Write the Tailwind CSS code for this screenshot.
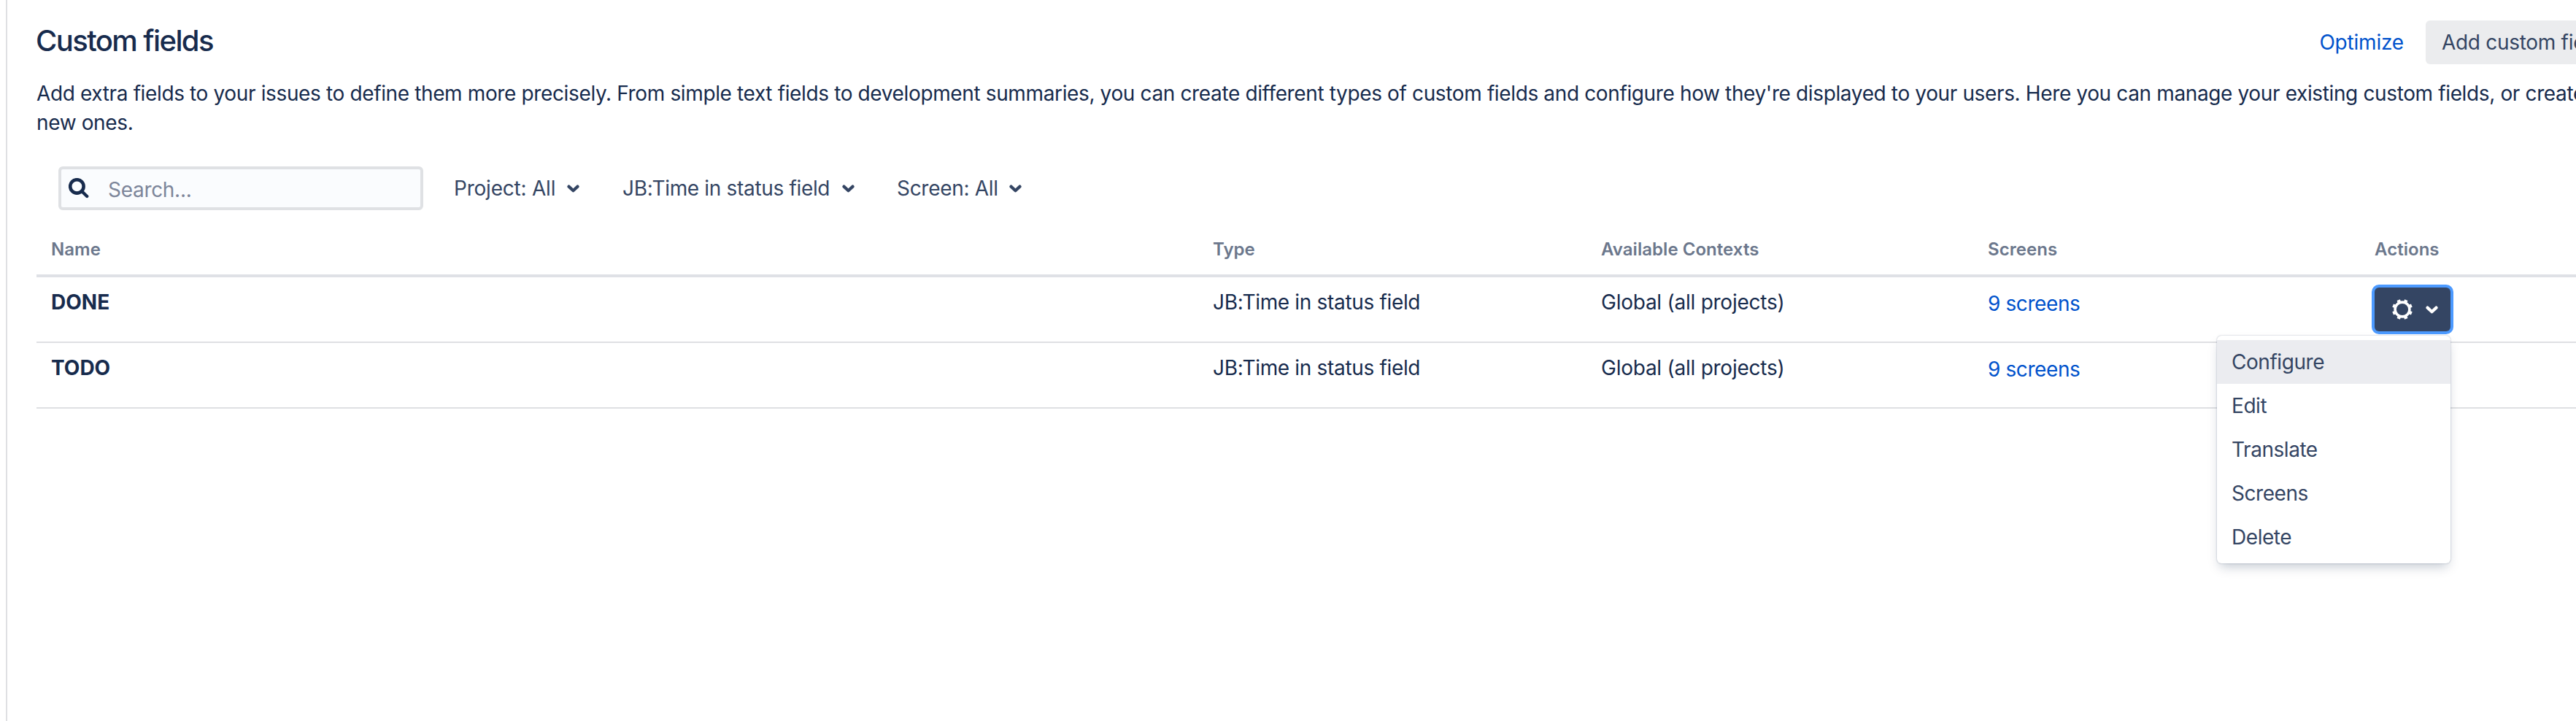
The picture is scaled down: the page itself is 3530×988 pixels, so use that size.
<!DOCTYPE html>
<html lang="en">
<head>
<meta charset="utf-8">
<title>Custom fields</title>
<script src="https://cdn.jsdelivr.net/npm/@tailwindcss/browser@4"></script>
</head>
<body class="bg-white overflow-hidden">
<svg class="hidden">
  <symbol id="chevron" viewBox="0 0 17 11"><path d="M2.5 2.6 8.5 8.2 14.5 2.6" fill="none" stroke="currentColor" stroke-width="4.2" stroke-linecap="round" stroke-linejoin="round"/></symbol>
  <symbol id="gear" viewBox="-14 -14 28 28">
    <circle r="9.9" fill="none" stroke="currentColor" stroke-width="3.6"/>
    <g stroke="currentColor" stroke-width="4.6" stroke-linecap="butt">
      <g transform="rotate(22.5)"><path d="M0-13.9V-10M0 13.9V10M-13.9 0H-10M13.9 0H10"/></g>
      <g transform="rotate(67.5)"><path d="M0-13.9V-10M0 13.9V10M-13.9 0H-10M13.9 0H10"/></g>
    </g>
  </symbol>
</svg>
<div class="h-[988px] w-full overflow-hidden pl-2 font-['Inter',sans-serif] text-[28px] leading-10 tracking-[-0.3px] text-[#172b4d]">
  <main class="h-full border-l-2 border-[#dfe0e3] pl-10">
    <div class="w-[3538px]">
      <header class="flex h-[108px] items-start justify-between pt-7">
        <h1 class="mt-1 text-[40px] leading-[48px] font-medium tracking-[-1.6px] -ml-px">Custom fields</h1>
        <div class="flex items-center">
          <a class="mr-[30px] tracking-[-0.2px] text-[#0052cc]">Optimize</a>
          <button class="h-[60px] w-[264px] rounded-md bg-[#ebecee] px-[22px] text-left whitespace-nowrap text-[#344563]">Add custom field</button>
        </div>
      </header>
      <p class="tracking-[-0.368px]">Add extra fields to your issues to define them more precisely. From simple text fields to development summaries, you can create different types of custom fields and configure how they're displayed to your users. Here you can manage your existing custom fields, or create new ones.</p>
      <div class="mt-10 ml-[30px] flex h-[60px] items-center text-[#344563]">
        <div class="mr-[42px] flex h-[60px] w-[500px] items-center rounded-md border-4 border-[#dfe1e4] bg-[#fafcfe] pl-2.5">
          <svg class="size-7 shrink-0 text-[#172b4d]" viewBox="0 0 28 28" fill="none" stroke="currentColor" stroke-linecap="round"><circle cx="11.4" cy="11.4" r="9.2" stroke-width="4.6"/><path d="M19 19l6.2 6" stroke-width="4.4"/></svg>
          <span class="mt-1 ml-[26px] text-[#7d869a]">Search...</span>
        </div>
        <button class="flex w-[231px] items-center gap-4"><span class="tracking-[-0.22px]">Project: All</span><svg class="h-[11px] w-[17px]"><use href="#chevron"/></svg></button>
        <button class="flex w-[376px] items-center gap-[17px]"><span class="tracking-[-0.33px]">JB:Time in status field</span><svg class="h-[11px] w-[17px]"><use href="#chevron"/></svg></button>
        <button class="flex items-center gap-[15px]"><span>Screen: All</span><svg class="h-[11px] w-[17px]"><use href="#chevron"/></svg></button>
      </div>
      <section>
        <div class="grid h-[92px] grid-cols-[1592px_532px_530px_530px_1fr] border-b-4 border-[#dfe1e6] pt-[38px] text-2xl leading-8 font-semibold tracking-[0.04px] text-[#6b778c] [&>div]:pl-5">
          <div>Name</div><div>Type</div><div>Available Contexts</div><div>Screens</div><div>Actions</div>
        </div>
        <div class="grid h-[90px] grid-cols-[1592px_532px_530px_530px_1fr] border-b-2 border-[#dfe0e3] pt-3.5 [&>div]:pl-5">
          <div class="font-bold tracking-[0px]">DONE</div>
          <div class="tracking-[-0.33px]">JB:Time in status field</div>
          <div class="tracking-[-0.25px]">Global (all projects)</div>
          <div class="pt-0.5 tracking-[-0.4px] text-[#0052cc]">9 screens</div>
          <div>
            <div class="relative w-[104px]">
              <button class="flex h-[60px] w-[104px] items-center gap-[18px] rounded-md bg-[#344563] pl-6 text-white ring-4 ring-[#4c9aff]">
                <svg class="size-7"><use href="#gear"/></svg>
                <svg class="h-[11px] w-[17px]"><use href="#chevron"/></svg>
              </button>
              <div class="absolute top-[66px] right-0 z-10 w-80 rounded-md bg-white py-1.5 tracking-[-0.45px] text-[#344563] shadow-[0_0_2px_rgba(9,30,66,0.35),0_8px_16px_-4px_rgba(9,30,66,0.25)] [&>div]:flex [&>div]:h-[60px] [&>div]:items-center [&>div]:px-5">
                <div class="bg-[#ebecf0]">Configure</div>
                <div>Edit</div>
                <div>Translate</div>
                <div>Screens</div>
                <div>Delete</div>
              </div>
            </div>
          </div>
        </div>
        <div class="grid h-[90px] grid-cols-[1592px_532px_530px_530px_1fr] border-b-2 border-[#dfe0e3] pt-3.5 [&>div]:pl-5">
          <div class="font-bold tracking-[0px]">TODO</div>
          <div class="tracking-[-0.33px]">JB:Time in status field</div>
          <div class="tracking-[-0.25px]">Global (all projects)</div>
          <div class="pt-0.5 tracking-[-0.4px] text-[#0052cc]">9 screens</div>
          <div></div>
        </div>
      </section>
    </div>
  </main>
</div>
</body>
</html>
